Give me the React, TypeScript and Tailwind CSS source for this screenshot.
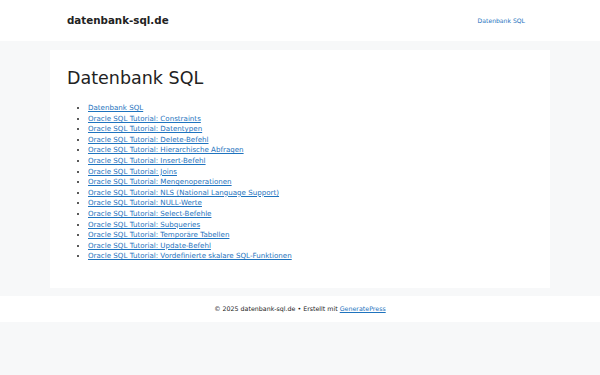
import React from "react";

const links = [
  "Datenbank SQL",
  "Oracle SQL Tutorial: Constraints",
  "Oracle SQL Tutorial: Datentypen",
  "Oracle SQL Tutorial: Delete-Befehl",
  "Oracle SQL Tutorial: Hierarchische Abfragen",
  "Oracle SQL Tutorial: Insert-Befehl",
  "Oracle SQL Tutorial: Joins",
  "Oracle SQL Tutorial: Mengenoperationen",
  "Oracle SQL Tutorial: NLS (National Language Support)",
  "Oracle SQL Tutorial: NULL-Werte",
  "Oracle SQL Tutorial: Select-Befehle",
  "Oracle SQL Tutorial: Subqueries",
  "Oracle SQL Tutorial: Temporäre Tabellen",
  "Oracle SQL Tutorial: Update-Befehl",
  "Oracle SQL Tutorial: Vordefinierte skalare SQL-Funktionen",
];

export default function App() {
  return (
    <div
      className="min-h-[375px] bg-[#f7f8f9] text-[#222222]"
      style={{ fontFamily: '"DejaVu Sans", sans-serif' }}
    >
      <header className="bg-white h-[41px] flex items-center justify-between pl-[67px] pr-[75px]">
        <div className="font-bold text-[10.3px] text-[#222222]">datenbank-sql.de</div>
        <a className="text-[6.1px] text-[#1e73be]">Datenbank SQL</a>
      </header>
      <main className="px-[50px] pt-[9px] pb-[8px]">
        <div className="bg-white px-[17px] pt-[16px] pb-[28px] h-[238px]">
          <h1 className="text-[17.5px] leading-[24px] text-[#222222]">Datenbank SQL</h1>
          <ul className="list-disc pl-[21px] mt-[13px] text-[7.1px] leading-[10.6px]">
            {links.map((l) => (
              <li key={l}>
                <a className="underline text-[#1e73be]">{l}</a>
              </li>
            ))}
          </ul>
        </div>
      </main>
      <footer className="bg-white h-[26px] flex items-center justify-center text-[6.3px] text-[#222222]">
        <span>
          © 2025 datenbank-sql.de • Erstellt mit{" "}
          <a className="underline text-[#1e73be]">GeneratePress</a>
        </span>
      </footer>
    </div>
  );
}
